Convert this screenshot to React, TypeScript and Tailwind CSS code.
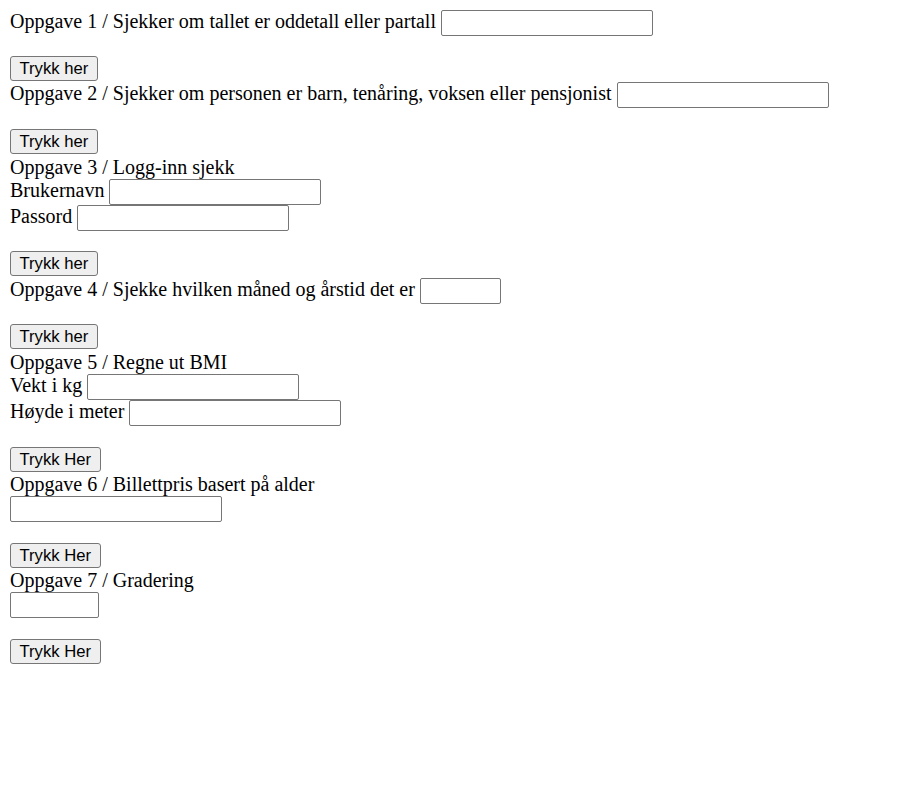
const inputCls =
  "box-border block h-[26px] shrink-0 rounded-[2px] border border-[#767676] bg-white px-[2px] py-[1px] font-['Liberation_Sans',Arial,sans-serif] text-[16.67px] outline-none";

function TextInput({ width = "w-[212px]" }: { width?: string }) {
  return <input type="text" className={`${inputCls} ${width}`} />;
}

// label + input on one 26px line
function Field({ label, width, className = "" }: { label?: string; width?: string; className?: string }) {
  return (
    <div className={`flex h-[26px] items-start gap-[5px] leading-[22px] ${className}`}>
      {label && <span className="whitespace-nowrap">{label}</span>}
      <TextInput width={width} />
    </div>
  );
}

function Heading({ text, h = "h-[24px] leading-[24px]" }: { text: string; h?: string }) {
  return <div className={`whitespace-nowrap ${h}`}>{text}</div>;
}

function Btn({ children, gap = "mt-[21px]" }: { children: React.ReactNode; gap?: string }) {
  return (
    <div className={`h-[26px] ${gap}`}>
      <button className="box-border block h-[25px] rounded-[3px] border border-[#767676] bg-[#efefef] px-[8.5px] font-['Liberation_Sans',Arial,sans-serif] text-[16.67px] leading-[20px] text-black">
        {children}
      </button>
    </div>
  );
}

export default function App() {
  return (
    <div className="min-h-[797px] bg-white p-[10px] font-['Liberation_Serif','Times_New_Roman',serif] text-[20px] text-black">
      <Field label="Oppgave 1 / Sjekker om tallet er oddetall eller partall" />
      <Btn gap="mt-[20px]">Trykk her</Btn>

      <Field label="Oppgave 2 / Sjekker om personen er barn, tenåring, voksen eller pensjonist" />
      <Btn>Trykk her</Btn>

      <Heading text="Oppgave 3 / Logg-inn sjekk" />
      <Field label="Brukernavn" />
      <Field label="Passord" />
      <Btn gap="mt-[20px]">Trykk her</Btn>

      <Field label="Oppgave 4 / Sjekke hvilken måned og årstid det er" width="w-[81px]" className="mt-[1px]" />
      <Btn gap="mt-[20px]">Trykk her</Btn>

      <Heading text="Oppgave 5 / Regne ut BMI" />
      <Field label="Vekt i kg" />
      <Field label="Høyde i meter" />
      <Btn>Trykk Her</Btn>

      <Heading text="Oppgave 6 / Billettpris basert på alder" h="h-[23px] leading-[23px]" />
      <Field />
      <Btn>Trykk Her</Btn>

      <Heading text="Oppgave 7 / Gradering" h="h-[23px] leading-[23px]" />
      <Field width="w-[89px]" />
      <Btn>Trykk Her</Btn>
    </div>
  );
}
